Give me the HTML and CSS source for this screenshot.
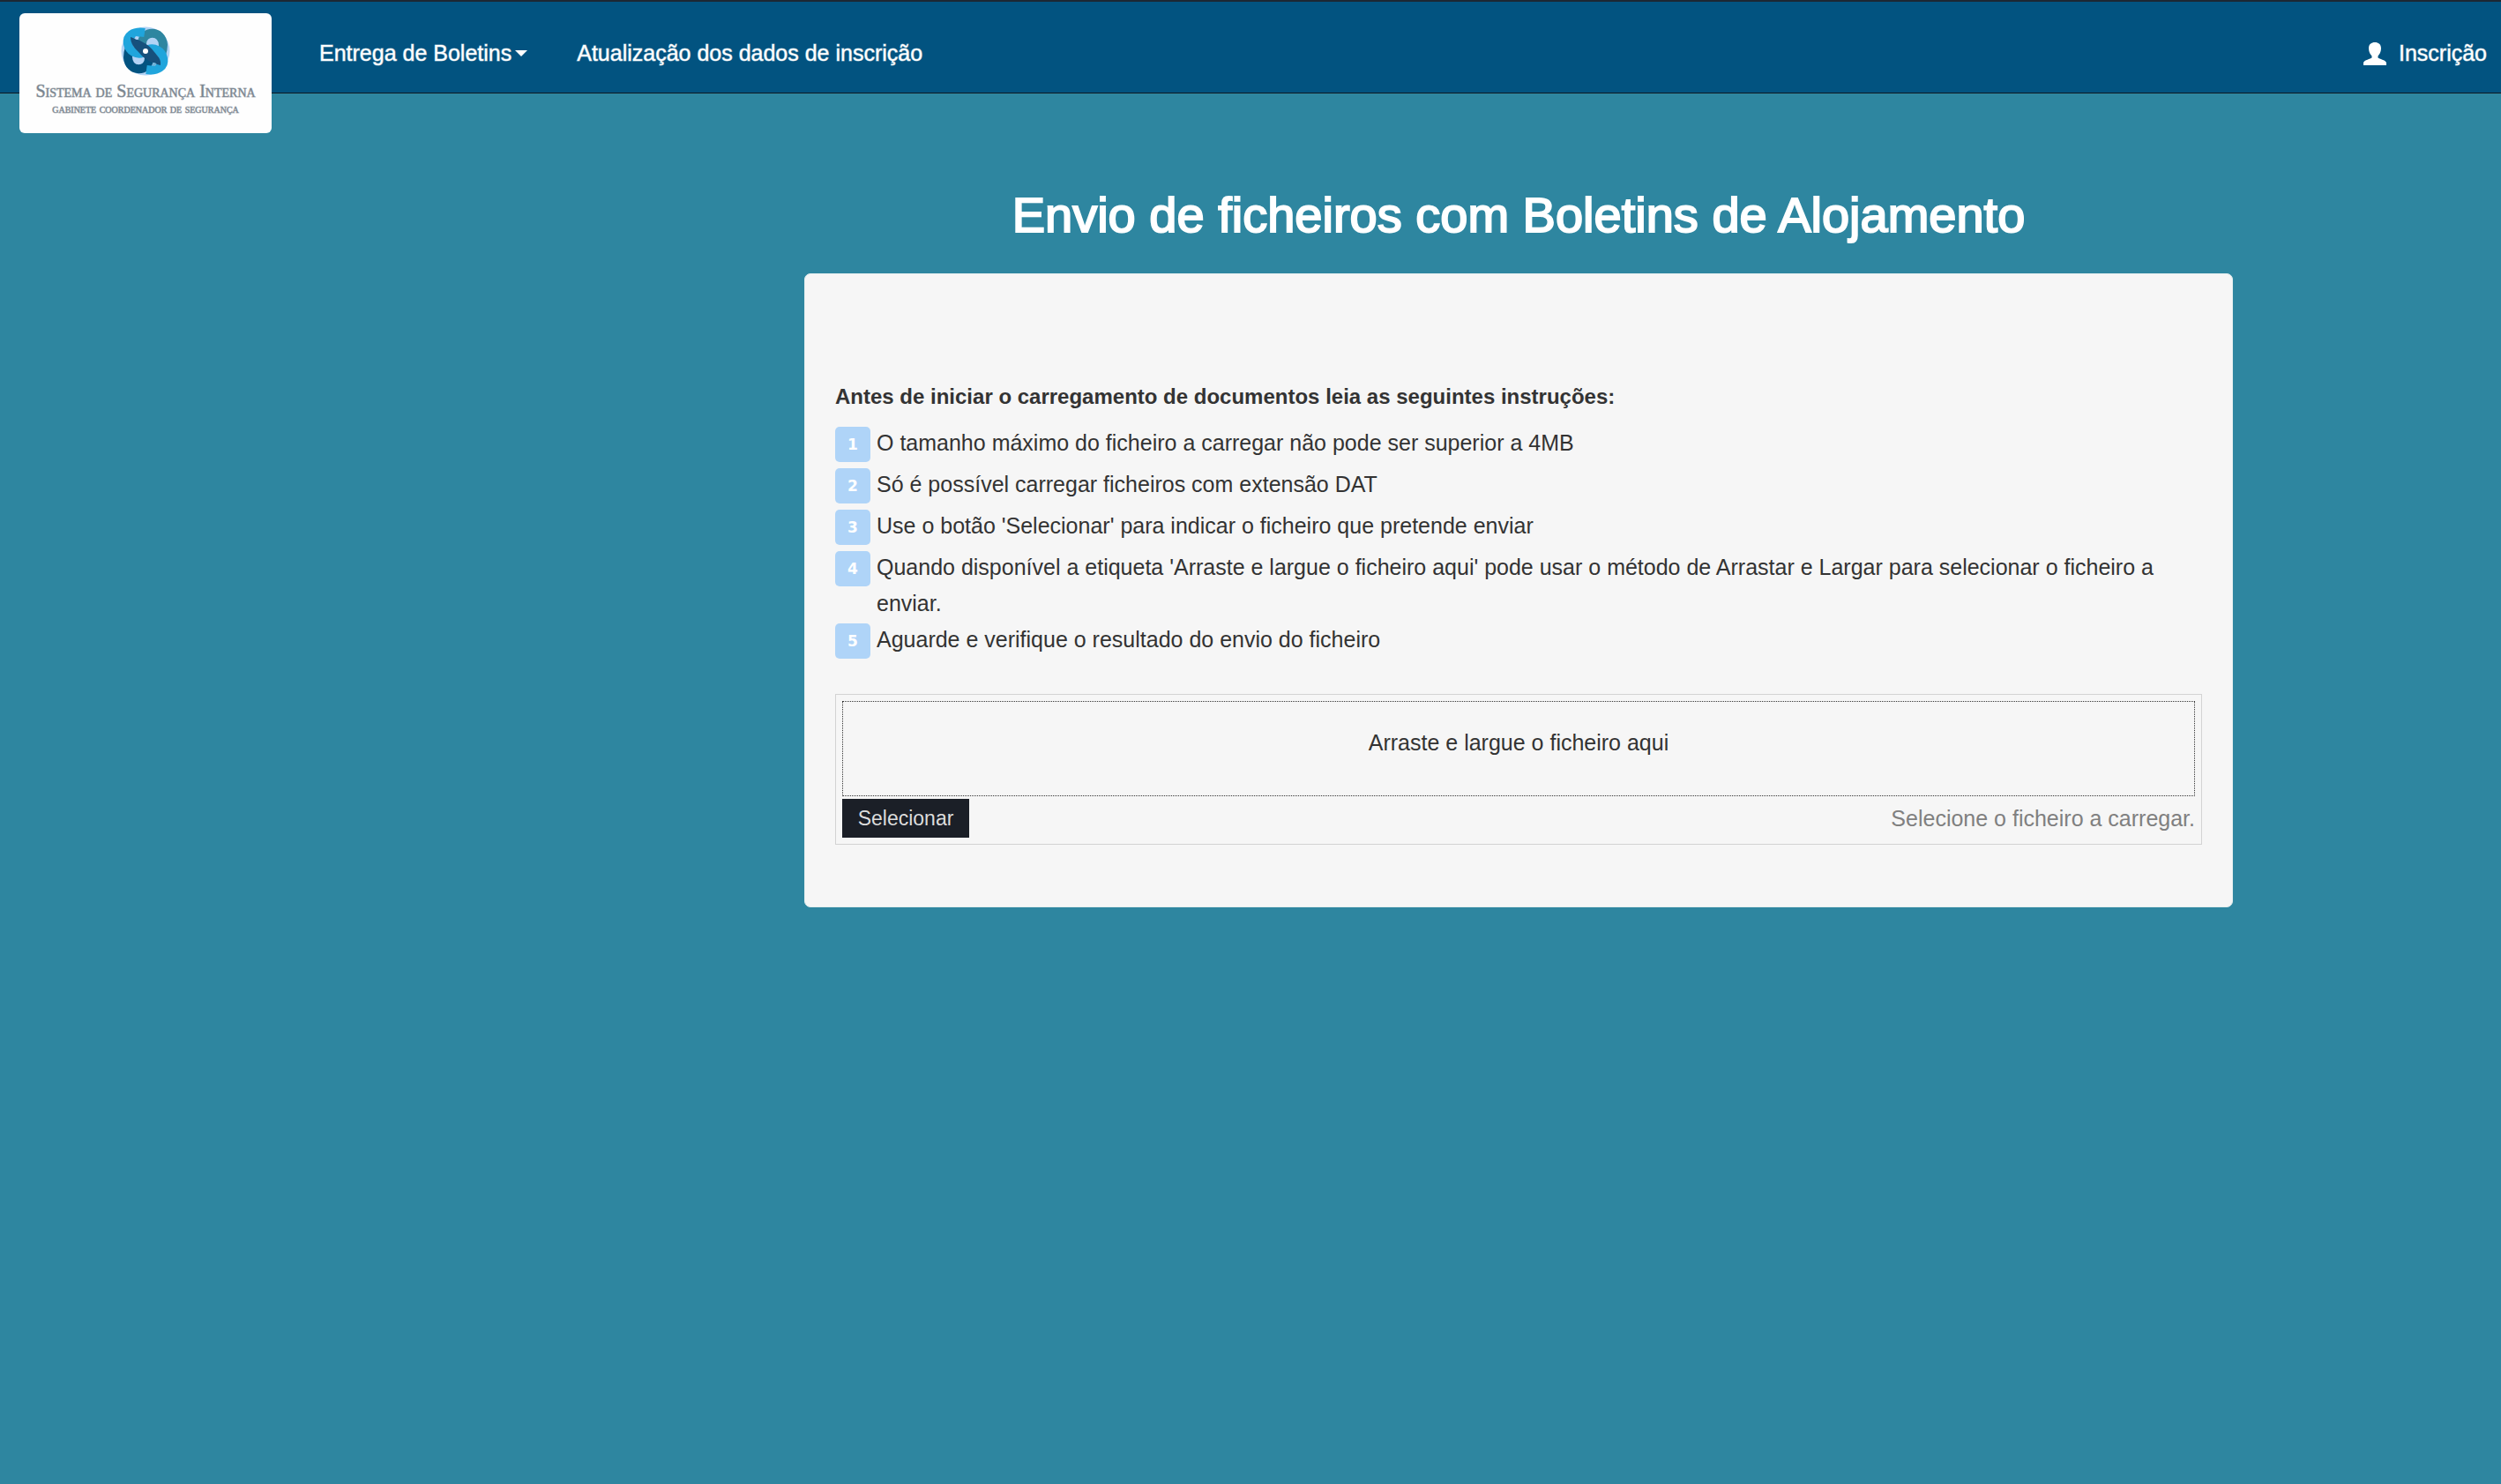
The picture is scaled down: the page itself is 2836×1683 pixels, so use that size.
FILE: index.html
```html
<!DOCTYPE html>
<html lang="pt">
<head>
<meta charset="utf-8">
<meta name="viewport" content="width=device-width, initial-scale=1">
<title>Envio de ficheiros com Boletins de Alojamento</title>
<link rel="stylesheet" href="styles.css">
</head>
<body>
<header class="navbar">
  <a class="brand" href="#">
    <svg class="brand-mark" viewBox="0 0 56 56" aria-hidden="true">
      <circle cx="28" cy="28" r="27.500" fill="#b3d3f5"/>
      <g fill="none" stroke-width="10">
        <path d="M24 20C24 4 47 3 48 21C48 26 47 29 46 32" stroke="#2e86a0"/>
        <path d="M32 36C32 52 9 53 8 35C8 30 9 27 10 24" stroke="#025380"/>
        <path d="M27 7C14 5 6 11 8 20C10 29 18 32 25 30" stroke="#20a5dc"/>
        <path d="M29 49C42 51 50 45 48 36C46 27 38 24 31 26" stroke="#20a5dc"/>
      </g>
      <path d="M11 12C20 15 31 19 38 29C42 34 46 37 45 44C38 42 28 39 21 30C16 25 11 20 11 12Z" fill="#16507c"/>
      <circle cx="28" cy="28" r="3" fill="#fff"/>
      <circle cx="18" cy="13" r="2" fill="#b3d3f5"/>
      <circle cx="38" cy="43" r="2" fill="#6fb3d8"/>
    </svg>
    <span class="brand-name">Sistema de Segurança Interna</span>
    <span class="brand-office">gabinete coordenador de segurança</span>
  </a>
  <nav class="nav">
    <a class="nav-link" href="#">Entrega de Boletins<span class="caret"></span></a>
    <a class="nav-link" href="#">Atualização dos dados de inscrição</a>
  </nav>
  <a class="nav-link nav-user" href="#">
    <svg class="user-icon" viewBox="0 0 26 26" aria-hidden="true">
      <path d="M13 0C17 0 20 2 20 7C20 11 18 14 16.500 15.500V17.500C18 19 25 20 26 23V26H0V23C1 20 8 19 9.500 17.500V15.500C8 14 6 11 6 7C6 2 9 0 13 0Z" fill="#fff"/>
    </svg>
    Inscrição
  </a>
</header>
<main class="page">
  <h1 class="title">Envio de ficheiros com Boletins de Alojamento</h1>
  <section class="panel">
    <h2 class="lead">Antes de iniciar o carregamento de documentos leia as seguintes instruções:</h2>
    <ol class="steps">
      <li class="step"><span class="badge">1</span><span>O tamanho máximo do ficheiro a carregar não pode ser superior a 4MB</span></li>
      <li class="step"><span class="badge">2</span><span>Só é possível carregar ficheiros com extensão DAT</span></li>
      <li class="step"><span class="badge">3</span><span>Use o botão 'Selecionar' para indicar o ficheiro que pretende enviar</span></li>
      <li class="step"><span class="badge">4</span><span>Quando disponível a etiqueta 'Arraste e largue o ficheiro aqui' pode usar o método de Arrastar e Largar para selecionar o ficheiro a enviar.</span></li>
      <li class="step"><span class="badge">5</span><span>Aguarde e verifique o resultado do envio do ficheiro</span></li>
    </ol>
    <div class="upload">
      <div class="dropzone">Arraste e largue o ficheiro aqui</div>
      <div class="upload-bar">
        <button class="select-button" type="button">Selecionar</button>
        <span class="hint">Selecione o ficheiro a carregar.</span>
      </div>
    </div>
  </section>
</main>
</body>
</html>
```
FILE: styles.css
```css
* { box-sizing: border-box; }

body {
  margin: 0;
  min-height: 100vh;
  background: #2e86a0;
  color: #333;
  font: 25px/41px "Liberation Sans", Arial, sans-serif;
}

.navbar {
  display: flex;
  align-items: flex-start;
  height: 106px;
  padding: 0 16px 0 22px;
  background: #025380;
  border-top: 2px solid #1c2733;
  border-bottom: 1px solid #101820;
}

.brand {
  display: flex;
  flex-direction: column;
  align-items: center;
  width: 286px;
  height: 136px;
  margin-top: 13px;
  padding-top: 15px;
  border-radius: 6px;
  background: #fefefe;
  color: #7a858f;
  font-family: "Liberation Serif", serif;
  font-variant: small-caps;
  text-decoration: none;
  white-space: nowrap;
  -webkit-text-stroke: 1px #7a858f80;
}

.brand-mark { width: 56px; height: 56px; }

.brand-name {
  margin-top: 5px;
  font-size: 20px;
  line-height: 24px;
}

.brand-office {
  font-size: 14px;
  line-height: 18px;
}

.nav {
  display: flex;
  gap: 56px;
  margin-left: 54px;
}

.nav-link {
  display: flex;
  align-items: center;
  height: 117px;
  color: #fff;
  text-decoration: none;
  -webkit-text-stroke: 1px #ffffff80;
}

.nav-user { gap: 14px; margin-left: auto; }

.user-icon { width: 26px; height: 26px; }

.caret {
  margin-left: 4px;
  border: 7px solid transparent;
  border-top-color: #fff;
  border-bottom: 0;
}

.page {
  display: grid;
  grid-template-columns: 912fr 1620fr 304fr;
  padding-top: 107px;
}

.title, .panel { grid-column: 2; }

.title {
  margin: 0 0 35px;
  color: #fff;
  font-size: 56px;
  font-weight: 400;
  line-height: 62px;
  text-align: center;
  -webkit-text-stroke: 2px #fff;
}

.panel {
  padding: 118px 34px 70px;
  border: 1px solid #e3eeee;
  border-radius: 7px;
  background: #f6f6f6;
}

.lead {
  margin: 0 0 12px;
  font-size: 24px;
  line-height: 41px;
}

.steps {
  margin: 0 0 35px;
  padding: 0;
  list-style: none;
}

.step {
  display: grid;
  grid-template-columns: 40px 1fr;
  gap: 7px;
}

.badge {
  height: 40px;
  margin: 2px 0 5px;
  border-radius: 5px;
  background: #afd4f8;
  color: #fff;
  font: bold 17px/40px "DejaVu Sans", sans-serif;
  text-align: center;
}

.upload {
  padding: 7px;
  border: 1px solid #d3d3d3;
}

.dropzone {
  height: 108px;
  padding-top: 26px;
  border: 1px dotted #333;
  text-align: center;
}

.upload-bar {
  display: flex;
  justify-content: space-between;
  align-items: center;
  margin-top: 3px;
}

.select-button {
  width: 144px;
  height: 44px;
  padding: 0;
  border: 0;
  background: #1b1f27;
  color: #dcdcdc;
  font: 23px/44px "Liberation Sans", Arial, sans-serif;
}

.hint { color: #808080; }
```
